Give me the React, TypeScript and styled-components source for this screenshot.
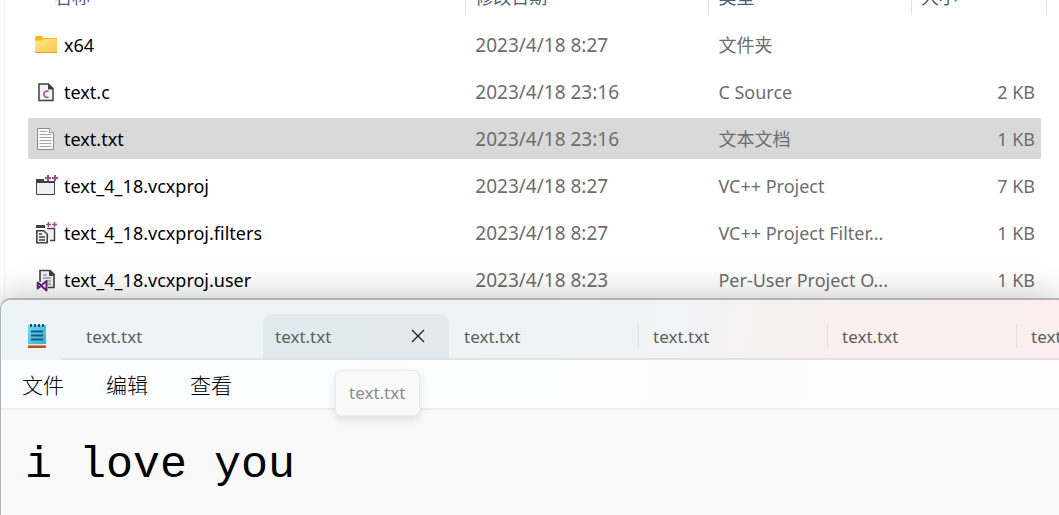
import React from "react";
import styled, { createGlobalStyle } from "styled-components";

const GlobalStyle = createGlobalStyle`
  * { box-sizing: border-box; }
  html, body { margin: 0; background: #fff; }
  body { font-family: "Noto Sans", "Noto Sans CJK SC", sans-serif; overflow: hidden; }
  button, textarea { font: inherit; color: inherit; border: 0; background: none; padding: 0; margin: 0; }
`;

const Page = styled.main`
  display: flex;
  flex-direction: column;
  min-height: 100vh;
  overflow: hidden;
`;

const Explorer = styled.section`
  margin-left: 4px;
  padding: 0 18px 0 23px;
  border-left: 1px solid #f3f3f3;
`;

const FileTable = styled.table`
  width: 100%;
  margin-top: -29px;
  table-layout: fixed;
  border-collapse: separate;
  border-spacing: 0 6px;
`;

const HeadCell = styled.th<{ $width?: string; $name?: boolean; $last?: boolean }>`
  position: relative;
  width: ${(p) => p.$width ?? "auto"};
  height: 41px;
  padding: 0 0 2px ${(p) => (p.$name ? 26 : 9)}px;
  color: #4c607a;
  font-size: 18px;
  font-weight: 400;
  line-height: 24px;
  text-align: left;

  &::after {
    content: "";
    position: absolute;
    top: 0;
    bottom: 3px;
    right: ${(p) => (p.$last ? -6 : 0)}px;
    width: 1px;
    background: #e5e5e5;
  }
`;

const Row = styled.tr<{ $selected?: boolean }>`
  td { background: ${(p) => (p.$selected ? "#d9d9d9" : "transparent")}; }
  td:first-child { border-radius: 2px 0 0 2px; }
  td:last-child { border-radius: 0 2px 2px 0; }
`;

const Cell = styled.td<{ $size?: number; $right?: boolean }>`
  height: 41px;
  padding: 0 6px 0 9px;
  color: #6d6d6d;
  font-size: ${(p) => p.$size ?? 18}px;
  line-height: 24px;
  text-align: ${(p) => (p.$right ? "right" : "left")};
  white-space: nowrap;
`;

const NameCell = styled(Cell)`
  padding: 0 6px;
  color: #000;
`;

const FileName = styled.div`
  display: flex;
  align-items: center;
  gap: 6px;

  svg { flex: none; }
`;

const Notepad = styled.section`
  position: relative;
  flex: 1;
  display: flex;
  flex-direction: column;
  margin-top: -8px;
  border-top: 2px solid #b4b4b4;
  border-left: 1px solid #b4b4b4;
  border-top-left-radius: 11px;
  background: #f9f9f9;
  box-shadow: 0 0 34px rgba(0, 0, 0, 0.26);
`;

const TitleBar = styled.header`
  display: flex;
  height: 60px;
  border-top-left-radius: 9px;
  background: linear-gradient(100deg, #ecf4f7 0%, #ecf4f8 30%, #edf4f6 45%, #eff3f5 58%, #f3f2f3 68%, #f9efee 79%, #faefee 100%);
`;

const AppIcon = styled.div`
  flex: none;
  width: 60px;
  padding: 23px 0 0 26px;
  line-height: 0;
`;

const TabList = styled.div`
  flex: 1;
  min-width: 0;
  display: flex;
  align-items: flex-end;
  padding-left: 13px;
  border-bottom: 2px solid rgba(0, 0, 0, 0.06);
`;

const TabSlot = styled.div<{ $divider?: boolean }>`
  position: relative;
  flex: none;
  width: 189px;
  padding-right: 3px;

  &::after {
    content: "";
    display: ${(p) => (p.$divider ? "block" : "none")};
    position: absolute;
    top: 10px;
    right: 2px;
    width: 1px;
    height: 24px;
    background: rgba(0, 0, 0, 0.07);
  }
`;

const Tab = styled.div<{ $hover?: boolean }>`
  display: flex;
  align-items: center;
  justify-content: space-between;
  height: 44px;
  padding: 2px 24px 0 12px;
  border-radius: 10px 10px 0 0;
  background: ${(p) => (p.$hover ? "rgba(0, 20, 20, 0.045)" : "transparent")};
  color: #5b5f61;
  font-size: 17px;
  line-height: 24px;
`;

const CloseButton = styled.button`
  padding-bottom: 2px;
  line-height: 0;
  color: #1b1b1b;
`;

const Tooltip = styled.div`
  position: absolute;
  z-index: 1;
  top: 56px;
  left: 72px;
  padding: 10px 14px 10px 13px;
  border: 1px solid #ececec;
  border-radius: 6px;
  background: #fafafa;
  box-shadow: 0 4px 8px rgba(0, 0, 0, 0.1);
  color: #8b8b8b;
  font-size: 17px;
  line-height: 24px;
`;

const MenuBar = styled.nav`
  display: flex;
  gap: 42px;
  height: 50px;
  padding: 0 21px;
  border-bottom: 2px solid #ededed;
  background: linear-gradient(100deg, #fafcff 0%, #fbfdfd 40%, #fcfbfc 65%, #fdfbfc 100%);
  color: #000;
  font-size: 21px;
  font-weight: 300;
`;

const Editor = styled.textarea`
  flex: 1;
  display: block;
  width: 100%;
  min-height: 104px;
  padding: 30px 24px 0;
  resize: none;
  outline: 0;
  overflow: hidden;
  color: #000;
  font-family: "Liberation Mono", monospace;
  font-size: 45px;
  line-height: 52px;
`;

const FolderIcon = () => (
  <svg width="24" height="24" viewBox="0 0 24 24" aria-hidden="true">
    <defs>
      <linearGradient id="folder" x1="0" y1="0" x2="1" y2="1">
        <stop offset="0" stopColor="#ffe59a" />
        <stop offset="1" stopColor="#fdc93c" />
      </linearGradient>
    </defs>
    <path d="M1 4.500Q1 3 2.500 3H8l1 2h14v4H1z" fill="#f9b71c" />
    <path d="M1 7.500h6.500L9.500 6H23v13.500H1z" fill="url(#folder)" />
    <path d="M1 19.500h22" stroke="#e2a22a" />
  </svg>
);

const CSourceIcon = () => (
  <svg width="24" height="24" viewBox="0 0 24 24" aria-hidden="true">
    <path d="M5 4h9l5 5v11.500H5z" fill="#f1f1f1" stroke="#424242" strokeWidth="1.500" />
    <path d="M14 3.500h1L19.500 8v1.500H14z" fill="#424242" />
    <path d="M14.500 11.500c-2.400-1-4.600.2-4.600 2.800s2.200 3.700 4.600 2.700" fill="none" stroke="#a35aa5" strokeWidth="1.700" />
  </svg>
);

const TextIcon = () => (
  <svg width="24" height="24" viewBox="0 0 24 24" aria-hidden="true">
    <path d="M3.500 1.500h12l4 4v17h-16z" fill="#fafafa" stroke="#8b8b8b" />
    <path d="M15.500 1.500v4h4" fill="#eee" stroke="#999" />
    <path d="M5.500 7.500h12M5.500 10.500h12M5.500 13.500h12M5.500 16.500h12M5.500 19.500h12M5.500 4.500h8" stroke="#a3a3a3" />
  </svg>
);

const ProjectIcon = () => (
  <svg width="24" height="24" viewBox="0 0 24 24" aria-hidden="true">
    <path d="M2.500 6.500h18v14h-18z" fill="#f0eff1" stroke="#424242" />
    <path d="M2 5h9v2h10v2H2z" fill="#424242" />
    <path d="M10 0h14v7H10z" fill="#fff" />
    <path d="M11 4h6M14 1v6M18 4h6M21 1v6" stroke="#9b4f96" strokeWidth="2" />
  </svg>
);

const FiltersIcon = () => (
  <svg width="24" height="24" viewBox="0 0 24 24" aria-hidden="true">
    <path d="M2 4h9v3H2z" fill="#424242" />
    <path d="M13 7.500h7.500v12H16" fill="#f0eff1" stroke="#424242" strokeWidth="1.500" />
    <path d="M2.800 9.800h7l3.500 3.500v8.500H2.800z" fill="#f0eff1" stroke="#424242" strokeWidth="1.600" />
    <path d="M5 13h3M5 16h6M5 19h6" stroke="#424242" strokeWidth="1.300" />
    <path d="M12 3.500h5M14.500 1v5M18 3.500h5M20.500 1v5" stroke="#9b4f96" strokeWidth="1.500" />
  </svg>
);

const UserIcon = () => (
  <svg width="24" height="24" viewBox="0 0 24 24" aria-hidden="true">
    <path d="M6 14V2.500h10l4 4v13h-6" fill="#f0eff1" stroke="#424242" strokeWidth="1.600" />
    <path d="M15 2h1.500L20.500 6v2H15z" fill="#424242" />
    <path d="M9 7h4M9 10h8M12 13h5M14 16h3" stroke="#77777a" strokeWidth="1.200" />
    <path d="M3.500 14v7l7.500-6.500v6.500z" fill="#fff" stroke="#fff" strokeWidth="3" />
    <path d="M3.700 14.500v6L12.500 13v9.500z" fill="none" stroke="#68217a" strokeWidth="2" strokeLinejoin="round" />
  </svg>
);

const NotepadIcon = () => (
  <svg width="20" height="26" viewBox="0 0 20 26" aria-hidden="true">
    <defs>
      <linearGradient id="pad" x1="0" y1="0" x2="1" y2="1">
        <stop offset="0" stopColor="#77d5f2" />
        <stop offset="1" stopColor="#3fabd0" />
      </linearGradient>
    </defs>
    <path d="M1 20h18v3.500q0 1.500-1.500 1.500H1z" fill="#b5530c" />
    <path d="M1 20h18v2.500H1z" fill="#e4e4e4" />
    <path d="M1 2h18v19H1z" fill="url(#pad)" />
    <path d="M4 1v3M8 1v3M12 1v3M16 1v3" stroke="#0b5a80" strokeWidth="2" />
    <path d="M4 8.500h12M4 12.500h12M4 16.500h12" stroke="#075f87" strokeWidth="2" />
  </svg>
);

const CloseIcon = () => (
  <svg width="14" height="14" viewBox="0 0 14 14" aria-hidden="true">
    <path d="M1 1l12 12M13 1L1 13" stroke="currentColor" strokeWidth="1.300" />
  </svg>
);

const files = [
  { icon: FolderIcon, name: "x64", date: "2023/4/18 8:27", type: "文件夹", size: "" },
  { icon: CSourceIcon, name: "text.c", date: "2023/4/18 23:16", type: "C Source", size: "2 KB" },
  { icon: TextIcon, name: "text.txt", date: "2023/4/18 23:16", type: "文本文档", size: "1 KB", selected: true },
  { icon: ProjectIcon, name: "text_4_18.vcxproj", date: "2023/4/18 8:27", type: "VC++ Project", size: "7 KB" },
  { icon: FiltersIcon, name: "text_4_18.vcxproj.filters", date: "2023/4/18 8:27", type: "VC++ Project Filter...", size: "1 KB" },
  { icon: UserIcon, name: "text_4_18.vcxproj.user", date: "2023/4/18 8:23", type: "Per-User Project O...", size: "1 KB" },
];

const tabs = [
  { id: 1 },
  { id: 2, hover: true },
  { id: 3, divider: true },
  { id: 4, divider: true },
  { id: 5, divider: true },
  { id: 6 },
];

export default function App() {
  return (
    <Page>
      <GlobalStyle />
      <Explorer>
        <FileTable>
          <thead>
            <tr>
              <HeadCell $name>名称</HeadCell>
              <HeadCell $width="24%">修改日期</HeadCell>
              <HeadCell $width="20%">类型</HeadCell>
              <HeadCell $width="129px" $last>大小</HeadCell>
            </tr>
          </thead>
          <tbody>
            {files.map((f) => (
              <Row key={f.name} $selected={f.selected}>
                <NameCell>
                  <FileName>
                    <f.icon />
                    {f.name}
                  </FileName>
                </NameCell>
                <Cell $size={19}>{f.date}</Cell>
                <Cell>{f.type}</Cell>
                <Cell $right>{f.size}</Cell>
              </Row>
            ))}
          </tbody>
        </FileTable>
      </Explorer>
      <Notepad>
        <TitleBar>
          <AppIcon>
            <NotepadIcon />
          </AppIcon>
          <TabList>
            {tabs.map((t) => (
              <TabSlot key={t.id} $divider={t.divider}>
                <Tab $hover={t.hover}>
                  <button>text.txt</button>
                  {t.hover && (
                    <CloseButton aria-label="关闭">
                      <CloseIcon />
                    </CloseButton>
                  )}
                </Tab>
                {t.hover && <Tooltip role="tooltip">text.txt</Tooltip>}
              </TabSlot>
            ))}
          </TabList>
        </TitleBar>
        <MenuBar>
          <button>文件</button>
          <button>编辑</button>
          <button>查看</button>
        </MenuBar>
        <Editor aria-label="文本编辑器" rows={1} spellCheck={false} defaultValue="i love you" />
      </Notepad>
    </Page>
  );
}
